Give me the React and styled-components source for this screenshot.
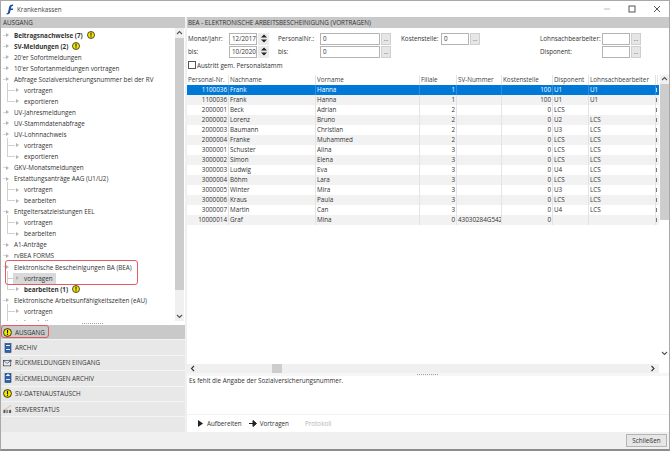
import React from "react";
import styled, { createGlobalStyle } from "styled-components";

const Global = createGlobalStyle`
  html, body { margin: 0; padding: 0; background: #fff; }
  * { box-sizing: border-box; }
  body { font-family: "Open Sans", "Noto Sans", sans-serif; font-size: 6.3px; color: #333; }
`;

const Window = styled.div`
  width: 670px;
  height: 451px;
  display: flex;
  flex-direction: column;
  overflow: hidden;
  border-top: 1px solid #a8a8a8;
  border-left: 1px solid #a8a8a8;
  border-right: 1px solid #a8a8a8;
  border-bottom: 2px solid #8c8c8c;
`;

const TitleBar = styled.div`
  height: 16px;
  display: flex;
  align-items: center;
  padding-left: 5px;
  gap: 3px;
  color: #444;
`;

const Controls = styled.div`
  margin-left: auto;
  display: flex;
  align-items: center;
  color: #444;
`;

const ControlButton = styled.div`
  width: 25px;
  height: 16px;
  display: flex;
  align-items: center;
  justify-content: center;
`;

const Body = styled.div`
  flex: 1;
  display: flex;
  min-height: 0;
`;

const Left = styled.div`
  width: 184px;
  display: flex;
  flex-direction: column;
  background: #e8e8e8;
`;

const SectionHead = styled.div`
  height: 11px;
  flex: none;
  background: #c9c9c9;
  display: flex;
  align-items: center;
  padding-left: ${(p) => p.$pad}px;
  color: #333;
  white-space: nowrap;
`;

const TreeArea = styled.div`
  position: relative;
  height: 293px;
  flex: none;
  display: flex;
  background: #fff;
`;

const TreeList = styled.div`
  flex: 1;
  overflow: hidden;
  padding-top: 1.5px;
`;

const TreeRow = styled.div`
  position: relative;
  height: 11.05px;
  display: flex;
  align-items: center;
  padding-left: ${(p) => (p.$child ? 23 : 13)}px;
  font-weight: ${(p) => (p.$bold ? 700 : 400)};
  white-space: nowrap;
  gap: 4px;
`;

const RowArrow = styled.span`
  position: absolute;
  left: ${(p) => (p.$child ? 15 : 5)}px;
  top: 3.5px;
  width: 0;
  height: 0;
  border-left: 3px solid #b4b4b4;
  border-top: 2.5px solid transparent;
  border-bottom: 2.5px solid transparent;
`;

const RowLine = styled.span`
  position: absolute;
  left: 6px;
  top: ${(p) => (p.$first ? -2 : -6)}px;
  width: 8px;
  height: ${(p) => (p.$first ? 8 : 12)}px;
  border-left: 1px solid #d0d0d0;
  border-bottom: 1px solid #d0d0d0;
`;

const RowStub = styled.span`
  position: absolute;
  left: 2px;
  top: 5px;
  width: 3px;
  border-top: 1px solid #d8d8d8;
`;

const Picked = styled.span`
  background: ${(p) => (p.$on ? "#d9d9d9" : "transparent")};
  margin-left: ${(p) => (p.$on ? -11 : 0)}px;
  padding: 1px ${(p) => (p.$on ? 3 : 0)}px 1px ${(p) => (p.$on ? 11 : 0)}px;
`;

const VScroll = styled.div`
  width: 9px;
  flex: none;
  margin-right: 1px;
  display: flex;
  flex-direction: column;
  align-items: stretch;
  background: #f0f0f0;
  color: #555;
`;

const ScrollEnd = styled.div`
  height: ${(p) => p.$h}px;
  flex: none;
  display: flex;
  align-items: center;
  justify-content: center;
`;

const ScrollThumb = styled.div`
  height: ${(p) => p.$h}px;
  flex: ${(p) => (p.$h ? "none" : 1)};
  background: #cdcdcd;
`;

const Grip = styled.div`
  height: ${(p) => p.$h}px;
  flex: none;
  display: flex;
  align-items: center;
  justify-content: center;
  background: ${(p) => p.$bg || "#f0f0f0"};
  &::after {
    content: "";
    width: 22px;
    height: 1px;
    background-image: linear-gradient(90deg, #a0a0a0 50%, transparent 50%);
    background-size: 2px 1px;
  }
`;

const Accordion = styled.div`
  position: relative;
  flex: 1;
  display: flex;
  flex-direction: column;
`;

const AccordionItem = styled.div`
  height: 15.4px;
  flex: none;
  display: flex;
  align-items: center;
  gap: 3px;
  padding-left: 2px;
  background: ${(p) => (p.$active ? "#c9c9c9" : "#e8e8e8")};
  border-bottom: 1px solid #f4f4f4;
  color: #333;
  white-space: nowrap;
`;

const IconSlot = styled.span`
  width: 9px;
  height: 10px;
  flex: none;
  display: flex;
  align-items: center;
  justify-content: center;
`;

const Right = styled.div`
  flex: 1;
  min-width: 0;
  display: flex;
  flex-direction: column;
  border-left: 2px solid #f0f0f0;
  background: #fff;
`;

const Form = styled.div`
  height: 47px;
  flex: none;
  padding: 4px 0 0 1px;
`;

const FormRows = styled.div`
  display: flex;
`;

const FieldGroup = styled.div`
  width: ${(p) => p.$w}px;
  display: grid;
  grid-template-columns: ${(p) => p.$label}px auto;
  grid-auto-rows: 13px;
  align-items: center;
  justify-content: start;
`;

const FieldWrap = styled.div`
  display: flex;
  align-items: center;
  gap: ${(p) => p.$gap ?? 1}px;
`;

const Input = styled.div`
  width: ${(p) => p.$w}px;
  height: 12px;
  border: 1px solid #b4b4b4;
  padding-left: 2px;
  display: flex;
  align-items: center;
  background: #fff;
`;

const DotButton = styled.div`
  width: 10px;
  height: 12px;
  background: #e6e6e6;
  border: 1px solid #cfcfcf;
  display: flex;
  align-items: center;
  justify-content: center;
  font-size: 6px;
  line-height: 1;
`;

const Spinner = styled.div`
  width: 11px;
  height: 12px;
  margin-left: 1px;
  display: flex;
  flex-direction: column;
  align-items: center;
  justify-content: center;
  gap: 1px;
  background: #ececec;
`;

const CheckRow = styled.div`
  display: flex;
  align-items: center;
  gap: 1px;
  margin-top: 2px;
  height: 10px;
`;

const CheckBox = styled.div`
  width: 8px;
  height: 8px;
  border: 1px solid #555;
  background: #fff;
`;

const GridArea = styled.div`
  height: 289px;
  flex: none;
  display: flex;
`;

const GridMain = styled.div`
  flex: 1;
  min-width: 0;
  overflow: hidden;
`;

const columns = "42px 87px 104px 37px 45px 51px 36px 67px 2px";

const GridHead = styled.div`
  display: grid;
  grid-template-columns: ${columns};
  height: 10px;
  color: #444;
  line-height: 10px;
`;

const HeadCell = styled.div`
  padding-left: 1px;
  border-right: 1px solid #e4e4e4;
  white-space: nowrap;
  overflow: hidden;
`;

const GridRow = styled.div`
  display: grid;
  grid-template-columns: ${columns};
  height: 10px;
  line-height: 10px;
  background: ${(p) => (p.$selected ? "#0078d7" : p.$alt ? "#f2f2f2" : "#fff")};
  color: ${(p) => (p.$selected ? "#fff" : "#333")};
`;

const Cell = styled.div`
  padding: 0 1px;
  text-align: ${(p) => (p.$right ? "right" : "left")};
  border-right: 1px solid ${(p) => (p.$selected ? "#2a8fe0" : "#e4e4e4")};
  white-space: nowrap;
  overflow: hidden;
`;

const CutCell = styled.div`
  position: relative;
  &::before {
    content: "";
    position: absolute;
    left: 0;
    top: 3px;
    width: 1px;
    height: 4px;
    background: ${(p) => (p.$selected ? "#cfe4f7" : "#777")};
  }
`;

const HScroll = styled.div`
  height: 9px;
  flex: none;
  display: flex;
  align-items: center;
  justify-content: space-between;
  background: #f0f0f0;
  margin-right: 10px;
  position: relative;
  padding: 0 3px;
  color: #333;
`;

const HThumb = styled.div`
  position: absolute;
  left: 85px;
  top: 0;
  width: 10px;
  height: 9px;
  background: #cdcdcd;
`;

const Message = styled.div`
  height: 39px;
  flex: none;
  padding-left: 2px;
  line-height: 10px;
  border-bottom: 1px solid #f2f2f2;
`;

const Toolbar = styled.div`
  flex: 1;
  display: flex;
  align-items: center;
  padding-left: 11px;
`;

const ToolItem = styled.div`
  display: flex;
  align-items: center;
  gap: ${(p) => p.$gap}px;
  margin-right: ${(p) => p.$mr}px;
  color: ${(p) => (p.$off ? "#b5b5b5" : "#333")};
`;

const Footer = styled.div`
  height: 17px;
  flex: none;
  background: #f0f0f0;
  display: flex;
  align-items: center;
  justify-content: flex-end;
  padding-right: 2px;
`;

const CloseButton = styled.div`
  width: 41px;
  height: 13px;
  background: #e6e6e6;
  border: 1px solid #b4b4b4;
  display: flex;
  align-items: center;
  justify-content: center;
`;

const RedBox = styled.div`
  position: absolute;
  left: ${(p) => p.$x}px;
  top: ${(p) => p.$y}px;
  width: ${(p) => p.$w}px;
  height: ${(p) => p.$h}px;
  border: 1px solid #e25a62;
  border-radius: 3px;
  pointer-events: none;
`;

const Warn = ({ size = 8 }) => (
  <svg width={size} height={size} viewBox="0 0 16 16" style={{ flex: "none" }}>
    <circle cx="8" cy="8" r="7" fill="#f5e800" stroke="#222" strokeWidth="1.6" />
    <rect x="7" y="3.2" width="2" height="6.2" fill="#111" />
    <rect x="7" y="10.6" width="2" height="2" fill="#111" />
  </svg>
);

const AppLogo = () => (
  <svg width="8" height="11" viewBox="0 0 8 11" style={{ flex: "none" }}>
    <path d="M7 .5C4.5.5 3.3 1.6 3 3.5L2.2 7.6C2 8.8 1.4 9.5.4 9.7l.2.9C3 10.5 4 9.4 4.3 7.6L4.6 6H7V4.6H4.9L5.2 3.2C5.4 2.3 6 1.9 7.2 1.9Z" fill="#1c4f9c" />
  </svg>
);

const DocIcon = ({ arrow }) => (
  <svg width="8" height="10" viewBox="1 0 8 10">
    <rect x="2" y="0.5" width="6" height="9" fill="#2f64ad" stroke="#1d3f73" strokeWidth="0.6" />
    <rect x="3" y="2" width="4" height="1" fill="#dfe9f7" />
    <rect x="3" y="6" width="4" height="1" fill="#dfe9f7" />
    {arrow && <path d="M4 1l1 2 1-2" fill="#fff" />}
  </svg>
);

const MailIcon = () => (
  <svg width="10" height="10" viewBox="0 0 11 10">
    <rect x="0.5" y="2" width="9" height="6.5" fill="#e8eef8" stroke="#333" strokeWidth="0.8" />
    <path d="M1 2.5l4 3 4-3" fill="none" stroke="#333" strokeWidth="0.7" />
    <path d="M7 4.5l3-3M10 1.5H8M10 1.5v2" fill="none" stroke="#2f64ad" strokeWidth="0.8" />
  </svg>
);

const ServerIcon = () => (
  <svg width="10" height="10" viewBox="0 0 10 10">
    <path d="M1 6.5L9 1" stroke="#d9a0a0" strokeWidth="0.8" fill="none" />
    <rect x="0.5" y="6" width="2.2" height="3.5" fill="#555" />
    <rect x="3.6" y="6" width="2.2" height="3.5" fill="#888" />
    <rect x="6.8" y="6" width="2.2" height="3.5" fill="#555" />
  </svg>
);

const Chevron = ({ dir }) => {
  const paths = {
    up: "M1 4l2.5-2.5L6 4",
    down: "M1 2l2.5 2.5L6 2",
    left: "M4 1L1.5 3.5 4 6",
    right: "M2.5 1L5 3.5 2.5 6",
  };
  return (
    <svg width="7" height="7" viewBox="0 0 7 7">
      <path d={paths[dir]} fill="none" stroke="currentColor" strokeWidth="1.1" />
    </svg>
  );
};

const SpinArrow = ({ down }) => (
  <svg width="6" height="4" viewBox="0 0 6 4">
    <path d={down ? "M0 .5h6L3 3.5Z" : "M3 .5l3 3H0Z"} fill="#222" />
  </svg>
);

const tree = [
  { text: "Beitragsnachweise (7)", bold: true, warn: true },
  { text: "SV-Meldungen (2)", bold: true, warn: true },
  { text: "20'er Sofortmeldungen" },
  { text: "10'er Sofortanmeldungen vortragen" },
  { text: "Abfrage Sozialversicherungsnummer bei der RV" },
  { text: "vortragen", child: true, first: true },
  { text: "exportieren", child: true },
  { text: "UV-Jahresmeldungen" },
  { text: "UV-Stammdatenabfrage" },
  { text: "UV-Lohnnachweis" },
  { text: "vortragen", child: true, first: true },
  { text: "exportieren", child: true },
  { text: "GKV-Monatsmeldungen" },
  { text: "Erstattungsanträge AAG (U1/U2)" },
  { text: "vortragen", child: true, first: true },
  { text: "bearbeiten", child: true },
  { text: "Entgeltersatzleistungen EEL" },
  { text: "vortragen", child: true, first: true },
  { text: "bearbeiten", child: true },
  { text: "A1-Anträge" },
  { text: "rvBEA FORMS" },
  { text: "Elektronische Bescheinigungen BA (BEA)" },
  { text: "vortragen", child: true, first: true, picked: true },
  { text: "bearbeiten (1)", child: true, bold: true, warn: true },
  { text: "Elektronische Arbeitsunfähigkeitszeiten (eAU)" },
  { text: "vortragen", child: true, first: true },
  { text: "bearbeiten", child: true },
];

const accordion = [
  { text: "AUSGANG", icon: <Warn size={9} />, active: true },
  { text: "ARCHIV", icon: <DocIcon /> },
  { text: "RÜCKMELDUNGEN EINGANG", icon: <MailIcon /> },
  { text: "RÜCKMELDUNGEN ARCHIV", icon: <DocIcon arrow /> },
  { text: "SV-DATENAUSTAUSCH", icon: <Warn size={9} /> },
  { text: "SERVERSTATUS", icon: <ServerIcon /> },
];

const headers = ["Personal-Nr.", "Nachname", "Vorname", "Filiale", "SV-Nummer", "Kostenstelle", "Disponent", "Lohnsachbearbeiter", ""];

const rows = [
  ["1100036", "Frank", "Hanna", "1", "", "100", "U1", "U1"],
  ["1100036", "Frank", "Hanna", "1", "", "100", "U1", "U1"],
  ["2000001", "Beck", "Adrian", "2", "", "0", "LCS", ""],
  ["2000002", "Lorenz", "Bruno", "2", "", "0", "U2", "LCS"],
  ["2000003", "Baumann", "Christian", "2", "", "0", "U3", "LCS"],
  ["2000004", "Franke", "Muhammed", "2", "", "0", "LCS", "LCS"],
  ["3000001", "Schuster", "Alina", "3", "", "0", "LCS", "LCS"],
  ["3000002", "Simon", "Elena", "3", "", "0", "LCS", "LCS"],
  ["3000003", "Ludwig", "Eva", "3", "", "0", "U4", "LCS"],
  ["3000004", "Böhm", "Lara", "3", "", "0", "LCS", "LCS"],
  ["3000005", "Winter", "Mira", "3", "", "0", "U3", "LCS"],
  ["3000006", "Kraus", "Paula", "3", "", "0", "LCS", "LCS"],
  ["3000007", "Martin", "Can", "3", "", "0", "U4", "LCS"],
  ["10000014", "Graf", "Mina", "0", "43030284G542", "0", "", ""],
];

const rightAligned = [0, 3, 5];

const App = () => (
  <>
    <Global />
    <Window>
      <TitleBar>
        <AppLogo />
        Krankenkassen
        <Controls>
          <ControlButton>
            <svg width="8" height="8" viewBox="0 0 8 8"><path d="M1 4h6" stroke="#aaa" strokeWidth="0.8" /></svg>
          </ControlButton>
          <ControlButton>
            <svg width="8" height="8" viewBox="0 0 8 8"><rect x="1" y="1" width="6" height="6" fill="none" stroke="#444" strokeWidth="0.9" /></svg>
          </ControlButton>
          <ControlButton>
            <svg width="8" height="8" viewBox="0 0 8 8"><path d="M1 1l6 6M7 1L1 7" stroke="#444" strokeWidth="0.9" /></svg>
          </ControlButton>
        </Controls>
      </TitleBar>
      <Body>
        <Left>
          <SectionHead $pad={2}>AUSGANG</SectionHead>
          <TreeArea>
            <TreeList>
              {tree.map((item, i) => (
                <TreeRow key={i} $child={item.child} $bold={item.bold}>
                  {item.child ? <RowLine $first={item.first} /> : <RowStub />}
                  <RowArrow $child={item.child} />
                  <Picked $on={item.picked}>{item.text}</Picked>
                  {item.warn && <Warn />}
                </TreeRow>
              ))}
            </TreeList>
            <VScroll>
              <ScrollEnd $h={10}><Chevron dir="up" /></ScrollEnd>
              <ScrollThumb $h={252} />
              <ScrollThumb style={{ background: "transparent" }} />
              <ScrollEnd $h={10}><Chevron dir="down" /></ScrollEnd>
            </VScroll>
            <RedBox $x={4} $y={232} $w={133} $h={25} />
          </TreeArea>
          <Grip $h={4} $bg="#fff" />
          <Accordion>
            {accordion.map((item) => (
              <AccordionItem key={item.text} $active={item.active}>
                <IconSlot>{item.icon}</IconSlot>
                {item.text}
              </AccordionItem>
            ))}
            <RedBox $x={0} $y={0} $w={48} $h={13} />
          </Accordion>
        </Left>
        <Right>
          <SectionHead $pad={1}>BEA - ELEKTRONISCHE ARBEITSBESCHEINIGUNG (VORTRAGEN)</SectionHead>
          <Form>
            <FormRows>
              <FieldGroup $w={90} $label={41}>
                <span>Monat/Jahr:</span>
                <FieldWrap $gap={0}>
                  <Input $w={28}>12/2017</Input>
                  <Spinner><SpinArrow /><SpinArrow down /></Spinner>
                </FieldWrap>
                <span>bis:</span>
                <FieldWrap $gap={0}>
                  <Input $w={28}>10/2020</Input>
                  <Spinner><SpinArrow /><SpinArrow down /></Spinner>
                </FieldWrap>
              </FieldGroup>
              <FieldGroup $w={123} $label={42}>
                <span>PersonalNr.:</span>
                <FieldWrap>
                  <Input $w={60}>0</Input>
                  <DotButton>...</DotButton>
                </FieldWrap>
                <span>bis:</span>
                <FieldWrap>
                  <Input $w={60}>0</Input>
                  <DotButton>...</DotButton>
                </FieldWrap>
              </FieldGroup>
              <FieldGroup $w={139} $label={40}>
                <span>Kostenstelle:</span>
                <FieldWrap>
                  <Input $w={28}>0</Input>
                  <DotButton>...</DotButton>
                </FieldWrap>
              </FieldGroup>
              <FieldGroup $w={110} $label={62}>
                <span>Lohnsachbearbeiter:</span>
                <FieldWrap>
                  <Input $w={28} />
                  <DotButton>...</DotButton>
                </FieldWrap>
                <span>Disponent:</span>
                <FieldWrap>
                  <Input $w={28} />
                  <DotButton>...</DotButton>
                </FieldWrap>
              </FieldGroup>
            </FormRows>
            <CheckRow>
              <CheckBox />
              Austritt gem. Personalstamm
            </CheckRow>
          </Form>
          <GridArea>
            <GridMain>
              <GridHead>
                {headers.map((h, i) => (
                  <HeadCell key={i}>{h}</HeadCell>
                ))}
              </GridHead>
              {rows.map((row, i) => (
                <GridRow key={i} $selected={i === 0} $alt={i % 2 === 1}>
                  {row.map((value, c) => (
                    <Cell key={c} $right={rightAligned.includes(c)} $selected={i === 0}>
                      {value}
                    </Cell>
                  ))}
                  <CutCell $selected={i === 0} />
                </GridRow>
              ))}
            </GridMain>
            <VScroll style={{ marginRight: 0, marginLeft: 1, height: 283 }}>
              <ScrollEnd $h={9}><Chevron dir="up" /></ScrollEnd>
              <ScrollThumb $h={136} />
              <ScrollThumb style={{ background: "#fff" }} />
              <ScrollEnd $h={9} style={{ background: "#fff" }}><Chevron dir="down" /></ScrollEnd>
            </VScroll>
          </GridArea>
          <HScroll>
            <Chevron dir="left" />
            <HThumb />
            <Chevron dir="right" />
          </HScroll>
          <Grip $h={3} $bg="#f6f6f6" />
          <Message>Es fehlt die Angabe der Sozialversicherungsnummer.</Message>
          <Toolbar>
            <ToolItem $gap={4} $mr={7}>
              <svg width="5" height="7" viewBox="0 0 5 7"><path d="M0 0l5 3.5L0 7Z" fill="#222" /></svg>
              Aufbereiten
            </ToolItem>
            <ToolItem $gap={3} $mr={16}>
              <svg width="8" height="7" viewBox="0 0 8 7"><path d="M0 3.5h5M4 .5l3.5 3L4 6.5Z" fill="#222" stroke="#222" strokeWidth="1" /></svg>
              Vortragen
            </ToolItem>
            <ToolItem $gap={0} $mr={0} $off>Protokoll</ToolItem>
          </Toolbar>
        </Right>
      </Body>
      <Footer>
        <CloseButton>Schließen</CloseButton>
      </Footer>
    </Window>
  </>
);

export default App;
